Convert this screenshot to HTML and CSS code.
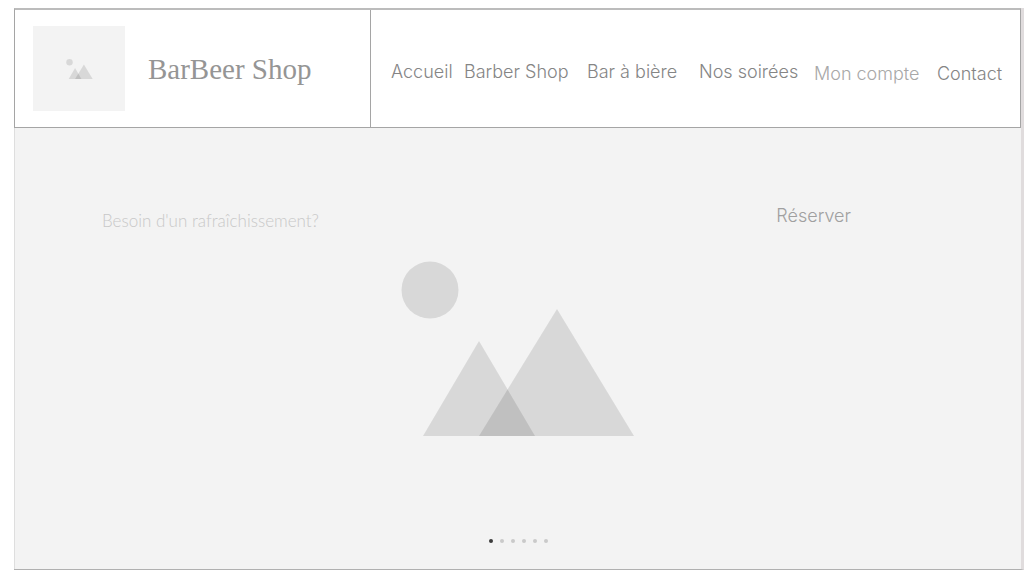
FILE: index.html
```html
<!DOCTYPE html>
<html lang="fr">
<head>
<meta charset="utf-8">
<meta name="viewport" content="width=device-width, initial-scale=1">
<title>BarBeer Shop</title>
<link rel="stylesheet" href="styles.css">
</head>
<body>
<div class="page">
  <header class="header">
    <div class="brand">
      <div class="logo">
        <svg class="logo-icon" viewBox="0 0 234 176" aria-hidden="true">
          <circle cx="29" cy="29" r="28.5"/>
          <path d="M22 175 78 80 134 175Z"/>
          <path d="M78 175 156 48 233 175Z"/>
        </svg>
      </div>
      <h1 class="title">BarBeer Shop</h1>
    </div>
    <nav class="nav">
      <a class="link" href="#">Accueil</a>
      <a class="link" href="#">Barber Shop</a>
      <a class="link" href="#">Bar à bière</a>
      <a class="link" href="#">Nos soirées</a>
      <a class="link link-low link-pale" href="#">Mon compte</a>
      <a class="link link-low" href="#">Contact</a>
    </nav>
  </header>
  <main class="hero">
    <div class="callout">
      <p class="question">Besoin d'un rafraîchissement?</p>
      <button class="reserve" type="button">Réserver</button>
    </div>
    <svg class="picture" viewBox="0 0 234 176" aria-hidden="true">
      <circle cx="29" cy="29" r="28.5"/>
      <path d="M22 175 78 80 134 175Z"/>
      <path d="M78 175 156 48 233 175Z"/>
    </svg>
    <div class="dots">
      <button class="dot dot-active" type="button" aria-label="Image 1"></button>
      <button class="dot" type="button" aria-label="Image 2"></button>
      <button class="dot" type="button" aria-label="Image 3"></button>
      <button class="dot" type="button" aria-label="Image 4"></button>
      <button class="dot" type="button" aria-label="Image 5"></button>
      <button class="dot" type="button" aria-label="Image 6"></button>
    </div>
  </main>
</div>
</body>
</html>
```
FILE: styles.css
```css
* {
  box-sizing: border-box;
}

body {
  margin: 0;
  background: #fff;
  font-family: Inter, "Open Sans", sans-serif;
  font-weight: 300;
}

.page {
  margin: 8px 11px 8px 14px;
  border-right: 3px solid #e0dcdd;
  border-bottom: 1px solid #b0b0b0;
}

.header {
  display: grid;
  grid-template-columns: 356px 1fr;
  border: 1px solid #a5a5a5;
  border-top: 2px solid #bcbcbc;
}

.brand {
  display: flex;
  align-items: center;
  gap: 23px;
  padding: 16px 18px;
  border-right: 1px solid #a5a5a5;
}

.logo {
  display: flex;
  align-items: center;
  justify-content: center;
  width: 92px;
  height: 85px;
  background: #f3f3f3;
}

.logo-icon {
  width: 27px;
  height: 20px;
}

.logo-icon,
.picture {
  fill: #000;
  fill-opacity: 0.11;
}

.title {
  margin: 0;
  font: 400 29px/34px "Liberation Serif", serif;
  color: #959595;
}

.nav {
  display: grid;
  grid-template-columns: 73fr 123fr 112fr 115fr 123fr 70fr;
  align-items: center;
  padding: 7px 13px 0 20px;
}

.link {
  font-size: 18px;
  line-height: 24px;
  color: #858585;
  text-decoration: none;
  white-space: nowrap;
}

.link-low {
  padding-top: 4px;
}

.link-pale {
  color: #a8a8a8;
}

.hero {
  display: flex;
  flex-direction: column;
  align-items: center;
  padding: 76px 0 26px;
  border-left: 1px solid #dedede;
  background: #f3f3f3;
}

.callout {
  display: flex;
  justify-content: space-between;
  align-items: flex-start;
  align-self: stretch;
  padding: 0 170px 0 87px;
}

.question {
  margin: 5px 0 0;
  font: 300 17px/24px Lato, sans-serif;
  color: #c8c8c8;
}

.reserve {
  padding: 0;
  border: 0;
  background: none;
  font: inherit;
  font-size: 18px;
  line-height: 24px;
  color: #a0a0a0;
}

.picture {
  width: 234px;
  height: 176px;
  margin-top: 28px;
}

.dots {
  display: flex;
  gap: 7px;
  margin-top: 102px;
}

.dot {
  width: 4px;
  height: 4px;
  padding: 0;
  border: 0;
  border-radius: 50%;
  background: #cacaca;
}

.dot-active {
  background: #3c3c3c;
}
```
